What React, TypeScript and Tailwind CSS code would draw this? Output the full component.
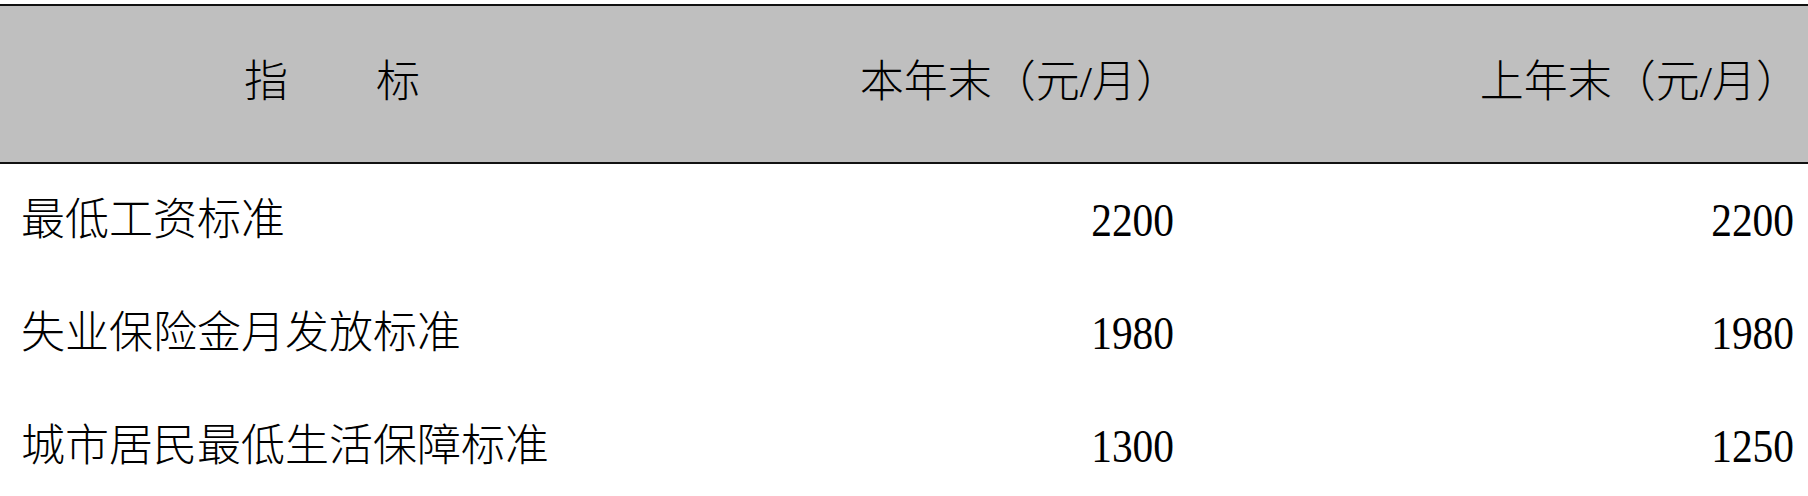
const rows = [
  { name: "最低工资标准", cur: "2200", prev: "2200" },
  { name: "失业保险金月发放标准", cur: "1980", prev: "1980" },
  { name: "城市居民最低生活保障标准", cur: "1300", prev: "1250" },
];

function Num({ value }: { value: string }) {
  return (
    <span className="inline-block origin-right scale-x-[0.9] text-[46px] leading-none font-normal">
      {value}
    </span>
  );
}

export default function App() {
  return (
    <div className="h-[496px] w-[1808px] overflow-hidden bg-white pt-[4px] font-['Liberation_Serif','Noto_Sans_CJK_SC',serif] text-black">
      {/* header */}
      <div className="grid h-[160px] grid-cols-[664px_510px_634px] items-center border-y-2 border-[#111] bg-[#bfbfbf] pb-[2px] text-[44px] leading-none font-light">
        <div className="text-center">指　　标</div>
        <div className="-mr-[6px] text-right">本年末（元/月）</div>
        <div className="pr-[8px] text-right">上年末（元/月）</div>
      </div>

      {/* body */}
      {rows.map((r) => (
        <div
          key={r.name}
          className="grid h-[113px] grid-cols-[664px_510px_634px] items-center text-[44px] leading-none"
        >
          <div className="pl-[21px] font-light">{r.name}</div>
          <div className="text-right">
            <Num value={r.cur} />
          </div>
          <div className="pr-[14px] text-right">
            <Num value={r.prev} />
          </div>
        </div>
      ))}
    </div>
  );
}
